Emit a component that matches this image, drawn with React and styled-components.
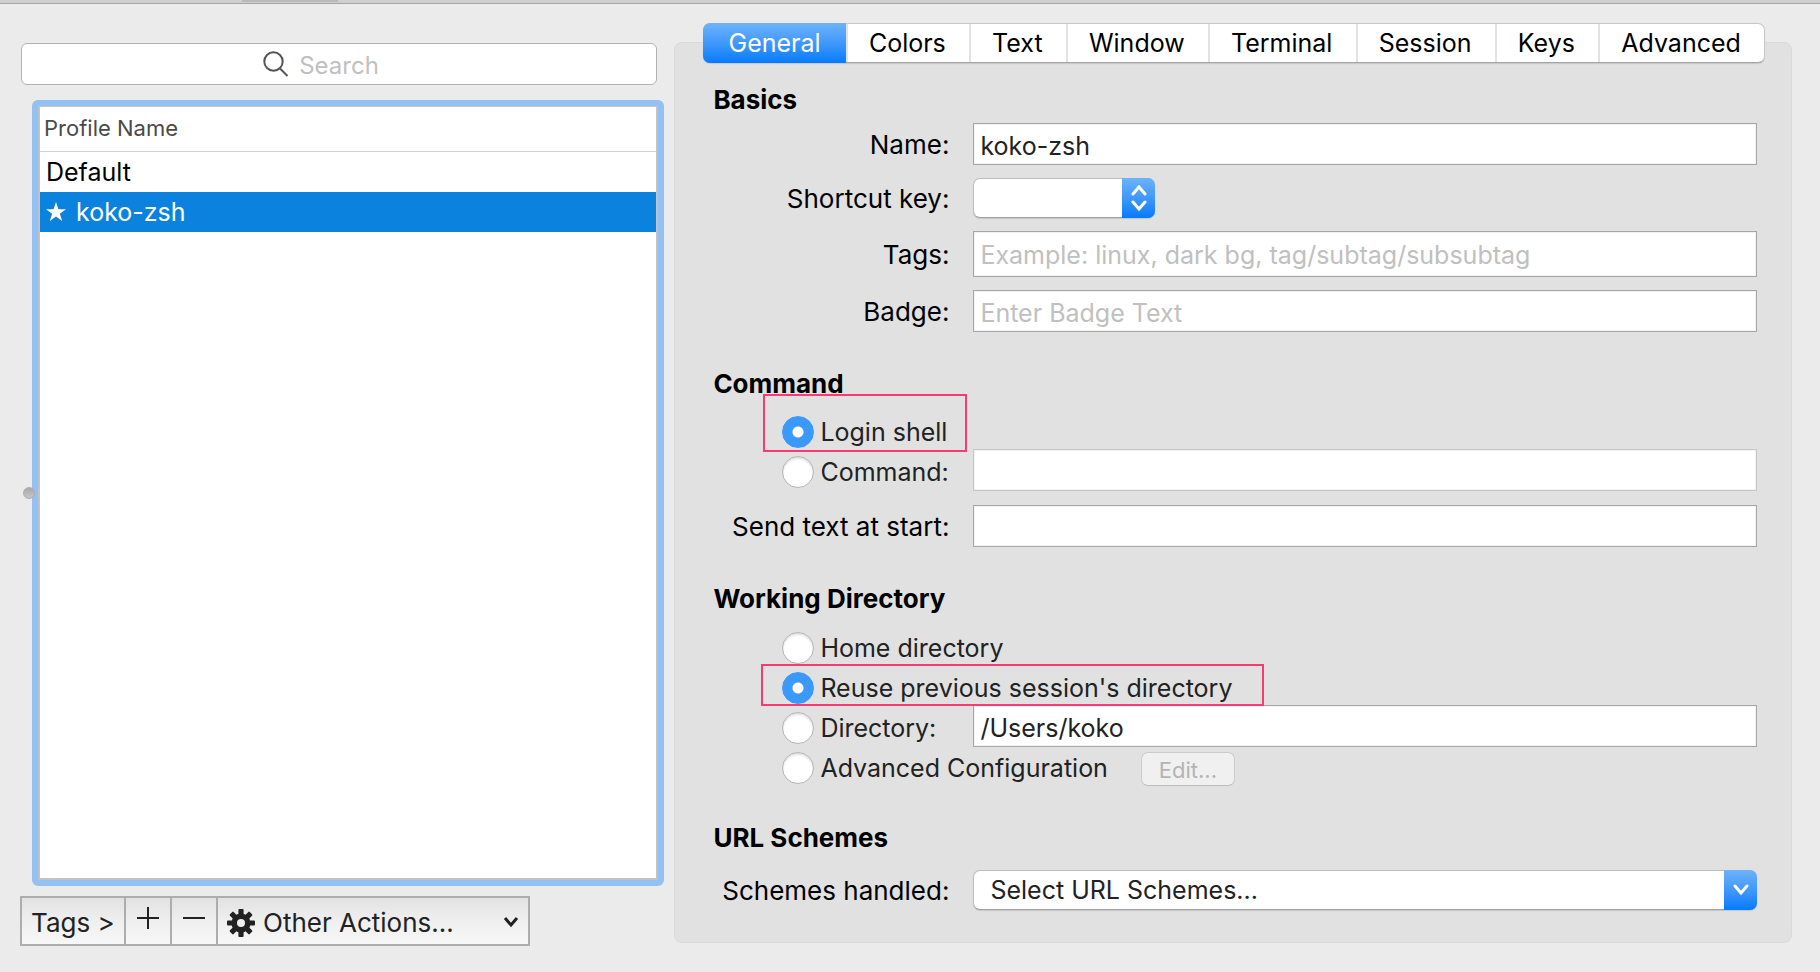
import React from "react";
import styled, { createGlobalStyle, css } from "styled-components";

const GlobalStyle = createGlobalStyle`
  *, *::before, *::after { box-sizing: border-box; }
  body {
    margin: 0;
    background: #ebebeb;
    color: #000;
    font-family: Inter, "Liberation Sans", sans-serif;
    font-size: 25px;
    line-height: 32px;
  }
  button, input, select { font: inherit; color: inherit; margin: 0; }
`;

const blueGradient = "linear-gradient(#6db3fa, #3b96fb 55%, #067aff)";

const Window = styled.div`
  display: flex;
  flex-direction: column;
  min-height: 100vh;
`;

const TitleStrip = styled.div`
  height: 4px;
  padding-left: 242px;
  background: #cfcfcf;
  border-bottom: 1px solid #a6a6a6;
`;

const StripTab = styled.div`
  width: 96px;
  height: 2px;
  background: #b9b9b9;
`;

const Body = styled.main`
  flex: 1;
  display: flex;
`;

const Sidebar = styled.aside`
  width: 37%;
  display: flex;
  flex-direction: column;
  padding: 39px 9px 26px 20px;
`;

const SearchField = styled.label`
  display: flex;
  align-items: center;
  justify-content: center;
  gap: 10px;
  height: 42px;
  margin: 0 7px 15px 1px;
  background: #fff;
  border: 1px solid #b2b2b2;
  border-radius: 6px;
`;

const SearchInput = styled.input`
  width: 116px;
  height: 32px;
  padding: 4px 0 0;
  border: 0;
  outline: 0;
  background: none;
  font-size: 24px;
  appearance: none;
  &::placeholder { color: #c0c0c0; opacity: 1; }
`;

const ListFrame = styled.div`
  position: relative;
  flex: 1;
  margin: 0 0 10px 12px;
  border: 6px solid #93c1f4;
  border-radius: 6px;
`;

const ListBox = styled.div`
  height: 100%;
  background: #fff;
  border: 2px solid #c3c3c3;
  border-top-width: 1px;
`;

const SplitterDot = styled.span`
  position: absolute;
  left: -15px;
  top: 50%;
  width: 12px;
  height: 12px;
  margin-top: -6px;
  border-radius: 50%;
  background: linear-gradient(#a8a8a8, #c6c6c6);
  border: 1px solid #acacac;
`;

const ProfileTable = styled.table`
  width: 100%;
  border-collapse: separate;
  border-spacing: 0;
  text-align: left;
`;

const HeaderCell = styled.th`
  height: 45px;
  padding: 0 4px 2px;
  border-bottom: 1px solid #d2d2d2;
  color: #4a4a4a;
  font-size: 22px;
  font-weight: 400;
`;

const ProfileCell = styled.td`
  height: 40px;
  padding: 0 6px;
  ${({ $selected }) => $selected && css`
    background: #0b82de;
    color: #fff;
  `}
`;

const ProfileLine = styled.span`
  display: flex;
  align-items: center;
  gap: 10px;
`;

const Toolbar = styled.div`
  display: flex;
  align-self: flex-start;
  height: 50px;
  border: 2px solid #adadad;
  background: linear-gradient(#e2e2e2, #efefef 50%, #f7f7f7);
  color: #222;
  font-size: 26px;
`;

const ToolButton = styled.button`
  display: flex;
  align-items: center;
  gap: 8px;
  width: ${({ $width }) => $width};
  padding: 4px 9px 0;
  border: 0;
  background: none;
  white-space: nowrap;
  & + & { border-left: 2px solid #adadad; }
`;

const IconToolButton = styled(ToolButton)`
  justify-content: center;
  padding: 0;
`;

const Caret = styled.svg`
  margin-left: auto;
`;

const Details = styled.section`
  flex: 1;
  display: flex;
  flex-direction: column;
  padding: 19px 28px 26px 1px;
`;

const Tabs = styled.div`
  position: relative;
  display: flex;
  height: 40px;
  margin: 0 27px 0 29px;
  background: #fff;
  border: 1px solid #c8c8c8;
  border-bottom-color: #a4a4a4;
  border-radius: 7px;
  box-shadow: 0 1px 1px rgba(0, 0, 0, 0.12);
`;

const Tab = styled.button`
  flex: 1 0 auto;
  padding: 0 21px 0 19px;
  border: 0;
  background: none;
  & + & { border-left: 2px solid #e2e2e2; }
  ${({ $active }) => $active && css`
    margin: -1px 0 -1px -1px;
    padding: 0 23px;
    background: ${blueGradient};
    color: #fff;
    border-radius: 7px 0 0 7px;
    & + & { border-left: 0; }
  `}
`;

const Panel = styled.form`
  margin-top: -21px;
  padding: 41px 34px 32px 38px;
  background: #e1e1e1;
  border: 1px solid #d9d9d9;
  border-radius: 8px;
`;

const Section = styled.section`
  & + & { margin-top: 36px; }
`;

const Heading = styled.h2`
  margin: 0 0 ${({ $gap }) => $gap}px;
  font-size: 26px;
  font-weight: 700;
  line-height: 32px;
`;

const Rows = styled.div`
  display: flex;
  flex-direction: column;
  gap: ${({ $gap }) => $gap || 13}px;
`;

const Row = styled.div`
  display: grid;
  grid-template-columns: 236px minmax(0, 1fr);
  column-gap: 24px;
  align-items: center;
`;

const ChoiceRow = styled(Row)`
  grid-template-rows: 40px;
`;

const Label = styled.label`
  padding-top: 2px;
  font-size: 26px;
  text-align: right;
  white-space: nowrap;
`;

const TextField = styled.input`
  width: 100%;
  height: ${({ $tall }) => ($tall ? 46 : 42)}px;
  padding: ${({ $tall }) => ($tall ? 2 : 4)}px 6px 0;
  border: 1px solid ${({ disabled }) => (disabled ? "#c6c6c6" : "#a6a6a6")};
  border-radius: 0;
  outline: 0;
  background: #fff;
  color: #222;
  box-shadow: inset 0 0 0 1px #f2f2f2;
  &::placeholder { color: #c0c0c0; opacity: 1; }
`;

const SelectBox = styled.div`
  position: relative;
  width: ${({ $width }) => $width || "100%"};
  height: 40px;
`;

const Select = styled.select`
  width: 100%;
  height: 40px;
  padding: 0 48px 0 16px;
  appearance: none;
  background: #fff;
  color: #222;
  border: 1px solid #bcbcbc;
  border-bottom-color: #a0a0a0;
  border-radius: 7px;
  box-shadow: 0 1px 1px rgba(0, 0, 0, 0.12);
`;

const SelectKnob = styled.span`
  position: absolute;
  inset: 0 0 0 auto;
  width: 33px;
  display: grid;
  place-items: center;
  background: ${blueGradient};
  border-radius: 0 7px 7px 0;
  pointer-events: none;
`;

const Choice = styled.label`
  position: relative;
  display: flex;
  align-items: center;
  gap: 6px;
  height: 32px;
  margin: 4px 0 0 69px;
  color: #222;
  white-space: nowrap;
`;

const ChoiceLine = styled.div`
  display: flex;
  align-items: center;
  gap: 33px;
  height: 40px;
`;

const Radio = styled.input`
  appearance: none;
  flex: none;
  width: 32px;
  height: 32px;
  border-radius: 50%;
  border: 1px solid #b4b4b4;
  background: #fff;
  box-shadow: inset 0 2px 2px rgba(0, 0, 0, 0.12);
  &:checked {
    border-color: #3b99fc;
    background: radial-gradient(circle, #fff 0 5px, #3b99fc 6px);
    box-shadow: none;
  }
`;

const Highlight = styled.span`
  position: absolute;
  inset: ${({ $inset }) => $inset};
  border: 2px solid #fb3a74;
  pointer-events: none;
`;

const EditButton = styled.button`
  width: 94px;
  height: 34px;
  margin-top: 6px;
  padding: 2px 0 0;
  border: 1px solid #cbcbcb;
  border-bottom-color: #bcbcbc;
  border-radius: 7px;
  background: #f0f0f0;
  color: #b4b4b4;
  font-size: 22px;
  line-height: 28px;
`;

function SearchIcon() {
  return (
    <svg width="26" height="26" viewBox="0 0 26 26" fill="none" stroke="#555" strokeWidth="2" aria-hidden="true">
      <circle cx="10.5" cy="10.5" r="9.2" />
      <path d="M17 17.5 L24.5 25" />
    </svg>
  );
}

function StarIcon() {
  return (
    <svg width="20" height="20" viewBox="0 0 20 20" fill="#fff" aria-hidden="true">
      <path d="M10 0 L12.4 7.2 L20 7.3 L13.9 11.8 L16.2 19 L10 14.6 L3.8 19 L6.1 11.8 L0 7.3 L7.6 7.2 Z" />
    </svg>
  );
}

function GearIcon() {
  return (
    <svg width="28" height="28" viewBox="-14 -14 28 28" fill="#222" aria-hidden="true">
      {[0, 45, 90, 135].map((angle) => (
        <rect key={angle} x="-2.6" y="-14" width="5.2" height="28" rx="1" transform={`rotate(${angle})`} />
      ))}
      <circle r="9.6" />
      <circle r="4" fill="#efefef" />
    </svg>
  );
}

const tabs = ["General", "Colors", "Text", "Window", "Terminal", "Session", "Keys", "Advanced"];

function RadioChoice({ name, label, checked, highlight }) {
  return (
    <Choice>
      <Radio type="radio" name={name} defaultChecked={checked} />
      {label}
      {highlight && <Highlight $inset={highlight} />}
    </Choice>
  );
}

export default function App() {
  return (
    <Window>
      <GlobalStyle />
      <TitleStrip><StripTab /></TitleStrip>
      <Body>
        <Sidebar>
          <SearchField>
            <SearchIcon />
            <SearchInput type="search" placeholder="Search" aria-label="Search" />
          </SearchField>
          <ListFrame>
            <ListBox>
              <ProfileTable>
                <thead>
                  <tr><HeaderCell scope="col">Profile Name</HeaderCell></tr>
                </thead>
                <tbody>
                  <tr><ProfileCell>Default</ProfileCell></tr>
                  <tr>
                    <ProfileCell $selected>
                      <ProfileLine><StarIcon />koko-zsh</ProfileLine>
                    </ProfileCell>
                  </tr>
                </tbody>
              </ProfileTable>
            </ListBox>
            <SplitterDot />
          </ListFrame>
          <Toolbar>
            <ToolButton type="button" $width="102px">Tags &gt;</ToolButton>
            <IconToolButton type="button" $width="46px" aria-label="Add profile">
              <svg width="22" height="32" viewBox="0 0 22 32" stroke="#222" strokeWidth="2" aria-hidden="true">
                <path d="M0 13H22M11 2V24" />
              </svg>
            </IconToolButton>
            <IconToolButton type="button" $width="46px" aria-label="Remove profile">
              <svg width="22" height="32" viewBox="0 0 22 32" stroke="#222" strokeWidth="2" aria-hidden="true">
                <path d="M0 13H22" />
              </svg>
            </IconToolButton>
            <ToolButton type="button" $width="312px">
              <GearIcon />
              Other Actions...
              <Caret width="16" height="12" viewBox="0 0 16 12" fill="none" stroke="#222" strokeWidth="3" aria-hidden="true">
                <path d="M2 1 L8 8 L14 1" />
              </Caret>
            </ToolButton>
          </Toolbar>
        </Sidebar>

        <Details>
          <Tabs role="tablist">
            {tabs.map((tab, index) => (
              <Tab key={tab} type="button" role="tab" aria-selected={index === 0} $active={index === 0}>
                {tab}
              </Tab>
            ))}
          </Tabs>
          <Panel>
            <Section>
              <Heading $gap={7}>Basics</Heading>
              <Rows>
                <Row>
                  <Label htmlFor="name">Name:</Label>
                  <TextField id="name" defaultValue="koko-zsh" />
                </Row>
                <Row>
                  <Label htmlFor="shortcut">Shortcut key:</Label>
                  <SelectBox $width="182px">
                    <Select id="shortcut"><option value="" aria-label="None" /></Select>
                    <SelectKnob>
                      <svg width="16" height="26" viewBox="0 0 16 26" fill="none" stroke="#fff" strokeWidth="3" strokeLinecap="round" aria-hidden="true">
                        <path d="M2 9 L8 2 L14 9 M2 17 L8 24 L14 17" />
                      </svg>
                    </SelectKnob>
                  </SelectBox>
                </Row>
                <Row>
                  <Label htmlFor="tags">Tags:</Label>
                  <TextField id="tags" $tall placeholder="Example: linux, dark bg, tag/subtag/subsubtag" />
                </Row>
                <Row>
                  <Label htmlFor="badge">Badge:</Label>
                  <TextField id="badge" placeholder="Enter Badge Text" />
                </Row>
              </Rows>
            </Section>

            <Section>
              <Heading $gap={10}>Command</Heading>
              <Rows $gap={15}>
                <div>
                  <ChoiceLine>
                    <RadioChoice name="command" label="Login shell" checked highlight="-22px -20px -4px -19px" />
                  </ChoiceLine>
                  <ChoiceRow>
                    <RadioChoice name="command" label="Command:" />
                    <TextField aria-label="Command" disabled />
                  </ChoiceRow>
                </div>
                <Row>
                  <Label htmlFor="send">Send text at start:</Label>
                  <TextField id="send" />
                </Row>
              </Rows>
            </Section>

            <Section>
              <Heading $gap={11}>Working Directory</Heading>
              <ChoiceLine>
                <RadioChoice name="directory" label="Home directory" />
              </ChoiceLine>
              <ChoiceLine>
                <RadioChoice name="directory" label="Reuse previous session's directory" checked highlight="-8px -32px -2px -21px" />
              </ChoiceLine>
              <ChoiceRow>
                <RadioChoice name="directory" label="Directory:" />
                <TextField aria-label="Directory" defaultValue="/Users/koko" />
              </ChoiceRow>
              <ChoiceLine>
                <RadioChoice name="directory" label="Advanced Configuration" />
                <EditButton type="button" disabled>Edit...</EditButton>
              </ChoiceLine>
            </Section>

            <Section>
              <Heading $gap={16}>URL Schemes</Heading>
              <Row>
                <Label htmlFor="schemes">Schemes handled:</Label>
                <SelectBox>
                  <Select id="schemes"><option>Select URL Schemes...</option></Select>
                  <SelectKnob>
                    <svg width="16" height="12" viewBox="0 0 16 12" fill="none" stroke="#fff" strokeWidth="3" strokeLinecap="round" aria-hidden="true">
                      <path d="M2 2 L8 9 L14 2" />
                    </svg>
                  </SelectKnob>
                </SelectBox>
              </Row>
            </Section>
          </Panel>
        </Details>
      </Body>
    </Window>
  );
}
